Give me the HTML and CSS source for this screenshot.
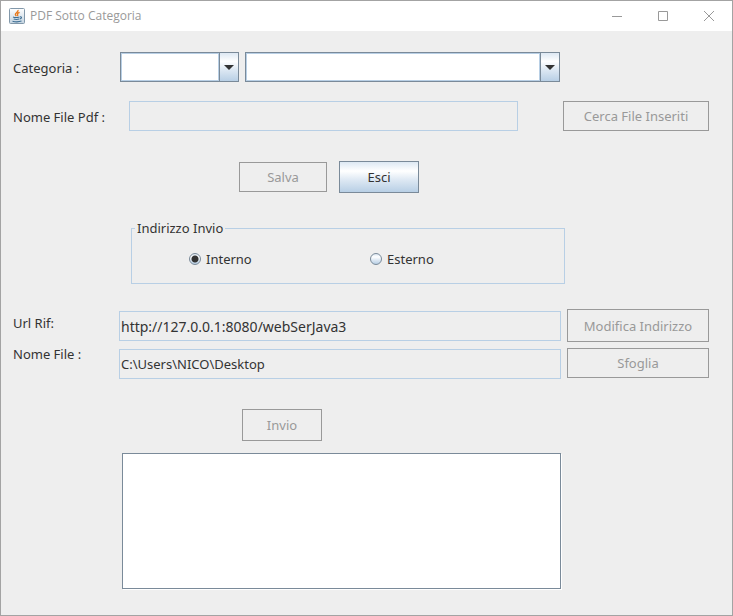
FILE: index.html
```html
<!DOCTYPE html>
<html lang="it">
<head>
<meta charset="utf-8">
<title>PDF Sotto Categoria</title>
<link rel="stylesheet" href="styles.css">
</head>
<body>
<div class="window">
  <header class="titlebar">
    <svg class="app-icon" viewBox="0 0 16 16" aria-hidden="true">
      <defs>
        <linearGradient id="tile" x1="0" y1="0" x2="0" y2="1">
          <stop offset="0" stop-color="#ffffff"/>
          <stop offset="1" stop-color="#c3d3e0"/>
        </linearGradient>
      </defs>
      <rect x=".5" y=".5" width="15" height="15" rx="1" fill="url(#tile)" stroke="#8298aa"/>
      <path d="M9 2c.8 2-3 2.800-2.600 4.600.1.600.7 1.100 1.100 1.500M10.600 4.300C9 4.900 8 5.700 8.600 6.700c.3.500.2.900-.3 1.400" fill="none" stroke="#e8791c" stroke-width="1.400"/>
      <path d="M4 9c1.500.6 4.500.6 6.500 0M4.700 11c1.500.5 4 .5 5.500 0M3.500 13.200c2.500.7 6.500.7 9-.1M11 8.800c2-.3 2.100 1.500-.2 2.300" fill="none" stroke="#3f6f94" stroke-width="1.100"/>
    </svg>
    <h1 class="title">PDF Sotto Categoria</h1>
    <div class="window-controls">
      <button class="control" type="button" aria-label="Riduci a icona"><svg viewBox="0 0 10 10"><path d="M0 5.500h10"/></svg></button>
      <button class="control" type="button" aria-label="Ingrandisci"><svg viewBox="0 0 10 10"><path d="M.5.500h9v9h-9z"/></svg></button>
      <button class="control" type="button" aria-label="Chiudi"><svg viewBox="0 0 10 10"><path d="M0 0l10 10M10 0L0 10"/></svg></button>
    </div>
  </header>

  <form class="form">
    <div class="row category-row">
      <label class="label" for="category">Categoria :</label>
      <div class="combo combo-code">
        <select id="category"><option></option></select>
        <span class="combo-arrow"><svg viewBox="0 0 10 5"><path d="M0 0h10L5 5z"/></svg></span>
      </div>
      <div class="combo combo-name">
        <select id="category-name" aria-label="Descrizione categoria"><option></option></select>
        <span class="combo-arrow"><svg viewBox="0 0 10 5"><path d="M0 0h10L5 5z"/></svg></span>
      </div>
    </div>

    <div class="row pdf-row">
      <label class="label" for="pdf">Nome File Pdf :</label>
      <input class="field pdf-field" id="pdf" type="text" readonly>
      <button class="button search-button" type="button" disabled>Cerca File Inseriti</button>
    </div>

    <div class="row action-row">
      <button class="button save-button" type="button" disabled>Salva</button>
      <button class="button small-button" type="button">Esci</button>
    </div>

    <fieldset class="address">
      <legend>Indirizzo Invio</legend>
      <label class="radio"><input type="radio" name="address" checked>Interno</label>
      <label class="radio"><input type="radio" name="address">Esterno</label>
    </fieldset>

    <div class="target">
      <div class="target-labels">
        <label for="url">Url Rif:</label>
        <label for="file">Nome File :</label>
      </div>
      <div class="target-fields">
        <input class="field url-field" id="url" type="text" value="http://127.0.0.1:8080/webSerJava3" readonly>
        <input class="field" id="file" type="text" value="C:\Users\NICO\Desktop" readonly>
      </div>
      <div class="target-buttons">
        <button class="button tall" type="button" disabled>Modifica Indirizzo</button>
        <button class="button" type="button" disabled>Sfoglia</button>
      </div>
    </div>

    <div class="row send-row">
      <button class="button small-button" type="button" disabled>Invio</button>
    </div>

    <textarea class="log" aria-label="Esito invio"></textarea>
  </form>
</div>
</body>
</html>
```
FILE: styles.css
```css
* {
  box-sizing: border-box;
}

body {
  margin: 0;
  background: #eeeeee;
  color: #333333;
  font: 13px/20px "Noto Sans", sans-serif;
}

button,
input,
select,
textarea {
  font: inherit;
  color: inherit;
  border-radius: 0;
}

.window {
  display: flex;
  flex-direction: column;
  min-height: 100vh;
  border: 1px solid #a3a3a3;
}

.titlebar {
  display: flex;
  align-items: center;
  height: 30px;
  padding-left: 8px;
  background: #ffffff;
}

.app-icon {
  width: 16px;
  height: 16px;
}

.title {
  flex: 1;
  margin: 0 0 0 5px;
  color: #999999;
  font: 12px/16px "Open Sans", sans-serif;
}

.window-controls {
  display: flex;
}

.control {
  display: flex;
  align-items: center;
  justify-content: center;
  width: 46px;
  height: 30px;
  padding: 0;
  border: 0;
  background: none;
}

.control svg {
  width: 10px;
  height: 10px;
  overflow: visible;
  fill: none;
  stroke: #999999;
}

.form {
  display: flex;
  flex-direction: column;
  padding: 21px 23px 26px 12px;
}

.row {
  display: flex;
  align-items: center;
}

.label {
  flex: none;
  width: 106px;
  padding-top: 2px;
}

.category-row {
  padding-right: 149px;
}

.category-row .label {
  width: 107px;
}

.combo {
  position: relative;
  height: 30px;
  border: 1px solid #7a8a99;
  background: #ffffff;
}

.combo-code {
  width: 119px;
}

.combo-name {
  flex: 1;
  margin-left: 6px;
}

.combo select {
  display: block;
  width: 100%;
  height: 100%;
  padding: 0 24px 0 4px;
  border: 1px solid #b8cfe5;
  background: none;
  appearance: none;
}

.combo-arrow {
  position: absolute;
  top: 0;
  right: 0;
  bottom: 0;
  display: flex;
  align-items: center;
  justify-content: center;
  width: 19px;
  border-left: 1px solid #7a8a99;
  box-shadow: -1px 0 #b8cfe5;
  background: linear-gradient(#dde8f3, #ffffff 30%, #dde8f3 60%, #b8cfe5);
  pointer-events: none;
}

.combo-arrow svg {
  width: 10px;
  height: 5px;
  fill: #333333;
}

.field {
  flex: 1;
  min-width: 0;
  height: 30px;
  padding: 0 1px;
  border: 1px solid #b8cfe5;
  background: #eeeeee;
}

.button {
  flex: none;
  height: 30px;
  padding: 0;
  border: 1px solid #7a8a99;
  background: linear-gradient(#dde8f3, #ffffff 30%, #dde8f3 60%, #b8cfe5);
}

.button:disabled {
  border-color: #999999;
  background: #eeeeee;
  color: #999999;
}

.pdf-row {
  margin-top: 19px;
}

.pdf-field {
  margin: 0 45px 0 10px;
}

.search-button {
  width: 146px;
}

.action-row {
  gap: 12px;
  margin-top: 30px;
  padding-left: 226px;
}

.save-button {
  width: 88px;
}

.small-button {
  width: 80px;
  height: 32px;
}

.address {
  display: flex;
  height: 66px;
  margin: 25px 144px 0 118px;
  padding: 11px 0 0 57px;
  border: 1px solid #b8cfe5;
}

.address legend {
  margin-left: -54px;
  padding: 0 2px;
}

.radio {
  display: flex;
  align-items: center;
  gap: 5px;
  width: 181px;
  height: 20px;
}

.radio input {
  width: 12px;
  height: 12px;
  margin: 0;
  border: 1px solid #7a8a99;
  border-radius: 50%;
  background: linear-gradient(#dde8f3, #ffffff 30%, #dde8f3 60%, #b8cfe5);
  appearance: none;
}

.radio input:checked {
  background:
    radial-gradient(circle, #333333 3px, transparent 4px),
    linear-gradient(#dde8f3, #ffffff 30%, #dde8f3 60%, #b8cfe5);
}

.target {
  display: flex;
  align-items: flex-start;
  margin-top: 25px;
}

.target-labels,
.target-fields,
.target-buttons {
  display: flex;
  flex-direction: column;
}

.target-labels {
  flex: none;
  gap: 11px;
  width: 106px;
  padding-top: 4px;
}

.target-fields {
  flex: 1;
  gap: 8px;
  padding-top: 2px;
}

.target-fields .field {
  flex: none;
}

.url-field {
  font-size: 14px;
}

.target-buttons {
  flex: none;
  gap: 6px;
  width: 142px;
  margin-left: 6px;
}

.tall {
  height: 33px;
}

.send-row {
  margin-top: 30px;
  padding-left: 229px;
}

.log {
  height: 136px;
  margin: 12px 148px 0 109px;
  padding: 2px;
  border: 1px solid #7a8a99;
  box-shadow: 1px 1px #ffffff;
  background: #ffffff;
  resize: none;
}
```
